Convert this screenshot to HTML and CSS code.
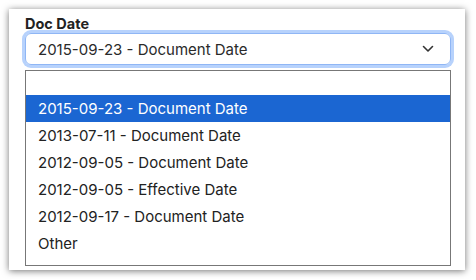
FILE: index.html
```html
<!DOCTYPE html>
<html lang="en">

<head>
  <meta charset="UTF-8">
  <meta name="viewport" content="width=device-width, initial-scale=1.0">
  <title>Doc Date</title>
  <link rel="stylesheet" href="styles.css">
</head>

<body>
  <div class="card">
    <div class="label">Doc Date</div>
    <div class="select">
      <span class="value">2015-09-23 - Document Date</span>
      <svg class="chevron" width="12" height="8" viewBox="0 0 12 8">
        <path d="M1.5 1.5 L6 6 L10.5 1.5" fill="none" stroke="#333" stroke-width="1.6" stroke-linecap="round" stroke-linejoin="round" />
      </svg>
    </div>
    <ul class="options">
      <li class="empty"></li>
      <li class="active">2015-09-23 - Document Date</li>
      <li>2013-07-11 - Document Date</li>
      <li>2012-09-05 - Document Date</li>
      <li>2012-09-05 - Effective Date</li>
      <li>2012-09-17 - Document Date</li>
      <li>Other</li>
    </ul>
  </div>
</body>

</html>
```

FILE: styles.css
```css
body,
ul,
li {
  margin: 0;
  padding: 0;
  box-sizing: border-box;
}
ul {
  list-style: none;
}
body {
  background: #fff;
  padding: 9px;
  font-family: Inter, "Noto Sans", sans-serif;
  color: #222;
}
.card {
  width: 456px;
  height: 261px;
  background: #fff;
  box-shadow: 0 1px 7px rgba(0, 0, 0, .55);
  padding: 6px 14px 0 16px;
  box-sizing: border-box;
}
.label {
  font-size: 14.5px;
  font-weight: 700;
  line-height: 18px;
  color: #222;
}
.select {
  height: 32px;
  border: 1px solid #8fb6f5;
  border-radius: 6px;
  box-shadow: 0 0 0 3px #b7d2fc;
  display: flex;
  align-items: center;
  justify-content: space-between;
  padding: 0 16px 0 12px;
  box-sizing: border-box;
}
.value {
  font-size: 15px;
  color: #2a2a2a;
}
.chevron {
  display: block;
}
.options {
  margin-top: 5px;
  border: 1px solid #777;
  height: 196px;
  padding-bottom: 8px;
}
.options li {
  height: 27px;
  line-height: 27px;
  padding-left: 12px;
  font-size: 15px;
  color: #222;
}
.options .empty {
  height: 24px;
}
.options .active {
  background: #1b66d2;
  color: #fff;
}
```
